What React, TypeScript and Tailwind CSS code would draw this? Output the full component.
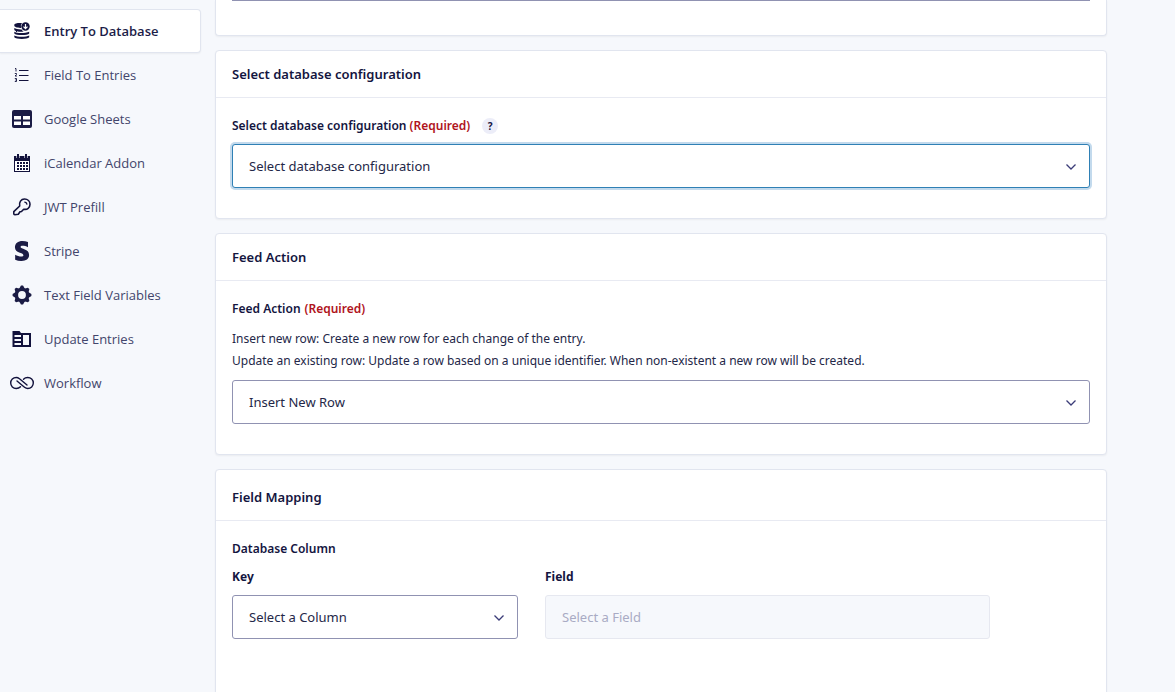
import { useState } from 'react'
import type { ReactNode, SelectHTMLAttributes } from 'react'
import clsx from 'clsx'
import { FaStripeS } from 'react-icons/fa'

function DatabaseIcon() {
  return (
    <svg width="16" height="18" viewBox="0 0 16 18" fill="#12123c">
      <path d="M.3 3C.3 1.600 3 1 6 1c.7 0 1.400 0 2 .1A4.800 4.800 0 0 0 7 5.900C3.300 6 .3 5 .3 3.600z" />
      <path d="M.3 6c1.500 1 4 1.500 7.300 1.400.5.900 1.200 1.600 2.100 2C6 10.200.3 9.700.3 7.600z" />
      <path d="M.3 9.700c2.400 1.700 11 1.700 14.900 0v1.900c-1.600 2-13.300 2-14.900 0z" />
      <path d="M.3 13.500c2.800 1.700 12 1.700 14.900 0v1.800c-1.600 2.300-13.300 2.300-14.900 0z" />
      <circle cx="11.500" cy="4.500" r="4.200" />
      <path d="M11.500 2v4.500M9.500 4.700l2 2 2-2" fill="none" stroke="#fff" strokeWidth="1.200" />
    </svg>
  )
}

function ListIcon() {
  return (
    <svg width="16" height="16" viewBox="0 0 16 16" fill="none" stroke="#12123c">
      <path d="M5 3.500h9.500M5 8.500h9.500M5 13.500h9.500" />
      <path d="M1 1.500h1v3M.8 6.500h1.700v1L1 9h2M.8 11.500h1.700v3H.8M1.300 13h1.200" strokeWidth=".9" />
    </svg>
  )
}

function SheetIcon() {
  return (
    <svg width="20" height="18" viewBox="0 0 20 18">
      <rect width="20" height="18" rx="2" fill="#1b1c45" />
      <path d="M2 6h7v3.500H2zM11 6h7v3.500h-7zM2 11.500h7V15H2zM11 11.500h7V15h-7z" fill="#fff" />
    </svg>
  )
}

function CalendarIcon() {
  return (
    <svg width="18" height="18" viewBox="0 0 18 18">
      <path d="M1 2h3V0h2v2h6V0h2v2h3v16H1z" fill="#12123c" />
      <path d="M3.500 2v2M6.500 2v2M11.500 2v2M14.500 2v2" stroke="#f6f8fc" strokeWidth=".6" />
      <path d="M2 7h14v10H2z" fill="#fff" />
      <path
        d="M4 8h2v2H4zM7 8h2v2H7zM10 8h2v2h-2zM13 8h2v2h-2zM4 11h2v2H4zM7 11h2v2H7zM10 11h2v2h-2zM13 11h2v2h-2zM4 14h2v2H4zM7 14h2v2H7zM10 14h2v2h-2zM13 14h2v2h-2z"
        fill="#12123c"
      />
    </svg>
  )
}

function KeyIcon() {
  return (
    <svg width="18" height="18" viewBox="0 0 18 18" fill="none" stroke="#12123c" strokeWidth="1.600" strokeLinejoin="round" strokeLinecap="round">
      <path d="M6.700 8C5.800 4.300 8.100 1 11.500 1 14.700 1 17 3.300 17 6.300c0 3.500-2.700 5.600-6.300 4.900L8.500 13.500 7 13.700 5.300 16.200 1.800 16.800c-.6 0-1-.4-1-1v-2.100z" />
      <path d="M11.800 4.200c1.200.2 1.900.9 2.100 1.900" strokeWidth="1.300" />
    </svg>
  )
}

const TEETH = [0, 45, 90, 135, 180, 225, 270, 315]

function GearIcon() {
  return (
    <svg width="20" height="20" viewBox="0 0 20 20" fill="#1b1c45">
      {TEETH.map((angle) => (
        <path key={angle} d="M6.800 4.200 9 .6h2l2.200 3.600z" transform={`rotate(${angle} 10 10)`} />
      ))}
      <circle cx="10" cy="10" r="5.500" fill="none" stroke="#1b1c45" strokeWidth="3.200" />
    </svg>
  )
}

function EntriesIcon() {
  return (
    <svg width="20" height="18" viewBox="0 0 20 18">
      <path d="M.5 1h7l1.500 2h10v14H.5z" fill="#12123c" />
      <path d="M2.500 5H9v2H2.500zM2.500 9H9v2H2.500zM2.500 13H9v2H2.500zM11 5h6v10h-6z" fill="#f6f8fc" />
    </svg>
  )
}

function WorkflowIcon() {
  return (
    <svg width="24" height="14" viewBox="0 0 24 14" fill="none" stroke="#12123c" strokeWidth="1.400" strokeLinecap="round">
      <path d="M17 9 9.500 2.800C8.500 2 7.400 1.500 6.200 1.500a5.400 5.400 0 0 0 0 11c1.800 0 3.300-.6 4.300-1.700" />
      <path d="M7 5l7.500 6.200c1 .8 2.100 1.300 3.300 1.300a5.400 5.400 0 0 0 0-11c-1.800 0-3.300.6-4.300 1.700" />
    </svg>
  )
}

const NAV_ITEMS: { label: string; icon: ReactNode }[] = [
  { label: 'Entry To Database', icon: <DatabaseIcon /> },
  { label: 'Field To Entries', icon: <ListIcon /> },
  { label: 'Google Sheets', icon: <SheetIcon /> },
  { label: 'iCalendar Addon', icon: <CalendarIcon /> },
  { label: 'JWT Prefill', icon: <KeyIcon /> },
  { label: 'Stripe', icon: <FaStripeS size={20} color="#1b1c45" /> },
  { label: 'Text Field Variables', icon: <GearIcon /> },
  { label: 'Update Entries', icon: <EntriesIcon /> },
  { label: 'Workflow', icon: <WorkflowIcon /> },
]

function Sidebar() {
  const [active, setActive] = useState('Entry To Database')

  return (
    <nav className="w-[201px] shrink-0 pt-[9px]">
      {NAV_ITEMS.map(({ label, icon }) => (
        <a
          key={label}
          href="#"
          onClick={(e) => { e.preventDefault(); setActive(label) }}
          className={clsx(
            'flex h-11 items-center gap-2 rounded-r border border-l-0 pl-2 text-[13px]',
            active === label
              ? 'border-[#e1e5ef] bg-white font-semibold text-[#1c1d48] shadow-xs'
              : 'border-transparent text-[#42456b]',
          )}
        >
          <span className="flex w-7 shrink-0 justify-center">{icon}</span>
          <span className="pt-0.5">{label}</span>
        </a>
      ))}
    </nav>
  )
}

function Card({ title, tall, children }: { title: string; tall?: boolean; children: ReactNode }) {
  return (
    <section className="rounded border border-[#e1e5ef] bg-white shadow-xs">
      <h2
        className={clsx(
          'flex items-center border-b border-[#e8eaf2] px-4 text-[13px] font-semibold text-[#14153f]',
          tall ? 'h-[51px] pt-1.5' : 'h-[47px] pt-0.5',
        )}
      >
        {title}
      </h2>
      <div className="px-4 pt-[17px] pb-[30px]">{children}</div>
    </section>
  )
}

interface SelectProps extends SelectHTMLAttributes<HTMLSelectElement> {
  focused?: boolean
  options: string[]
}

function Select({ focused, options, disabled, ...rest }: SelectProps) {
  return (
    <div className="relative">
      <select
        {...rest}
        disabled={disabled}
        className={clsx(
          'block h-11 w-full appearance-none rounded-[3px] border px-4 pt-0.5 text-[13px] outline-none',
          disabled && 'border-[#e6e8f0] bg-[#f6f8fc] text-[#a9abc4] opacity-100',
          !disabled && 'bg-white text-[#242748]',
          !disabled && (focused ? 'border-[#2f80b5] ring-2 ring-[#c3daed]' : 'border-[#9092b2]'),
        )}
      >
        {options.map((o) => <option key={o}>{o}</option>)}
      </select>
      {!disabled && (
        <svg
          className="pointer-events-none absolute top-5 right-3.5"
          width="10" height="6" viewBox="0 0 10 6"
          fill="none" stroke="#3b3c78" strokeWidth="1.300"
        >
          <path d="M.5.500 5 5l4.500-4.500" />
        </svg>
      )}
    </div>
  )
}

function Required() {
  return <span className="text-[#b0141c]">(Required)</span>
}

export default function App() {
  return (
    <div className="flex h-screen overflow-hidden bg-[#f6f8fc] font-['Open_Sans',sans-serif] text-[#242748]">
      <Sidebar />

      <main className="mr-[68px] ml-3.5 flex min-w-0 flex-1 flex-col gap-3.5 font-['Noto_Sans',sans-serif]">
        {/* Tail of the previous settings card */}
        <div className="h-9 shrink-0 rounded-b border border-t-0 border-[#e1e5ef] bg-white px-4 shadow-xs">
          <div className="border-t border-[#9092b2]" />
        </div>

        <Card title="Select database configuration">
          <div className="flex h-[22px] items-center text-[12px] font-semibold text-[#14153f]">
            <label htmlFor="configuration">
              Select database configuration <Required />
            </label>
            <button
              type="button"
              aria-label="Help"
              className="ml-3 flex size-4 items-center justify-center rounded-full bg-[#ecedf8] text-[10px] font-bold"
            >
              ?
            </button>
          </div>
          <div className="mt-[7px]">
            <Select id="configuration" focused options={['Select database configuration']} />
          </div>
        </Card>

        <Card title="Feed Action">
          <label htmlFor="action" className="flex h-[22px] items-center gap-1 text-[12px] font-semibold text-[#14153f]">
            Feed Action <Required />
          </label>
          <p className="mt-2 mb-2 text-[12px] leading-[22px]">
            Insert new row: Create a new row for each change of the entry.
            <br />
            Update an existing row: Update a row based on a unique identifier. When non-existent a new row will be created.
          </p>
          <Select id="action" options={['Insert New Row', 'Update an existing row']} />
        </Card>

        <section className="flex-1">
          <Card title="Field Mapping" tall>
            <h3 className="flex h-[22px] items-center text-[12px] font-semibold text-[#14153f]">Database Column</h3>
            <div className="mt-1.5 mb-10 grid grid-cols-[286fr_445fr_73fr] gap-x-[27px]">
              <div>
                <label htmlFor="key" className="mb-[7px] block text-[12px] leading-[22px] font-bold text-[#14153f]">Key</label>
                <Select id="key" options={['Select a Column']} />
              </div>
              <div>
                <label htmlFor="field" className="mb-[7px] block text-[12px] leading-[22px] font-bold text-[#14153f]">Field</label>
                <Select id="field" disabled options={['Select a Field']} />
              </div>
            </div>
          </Card>
        </section>
      </main>
    </div>
  )
}
